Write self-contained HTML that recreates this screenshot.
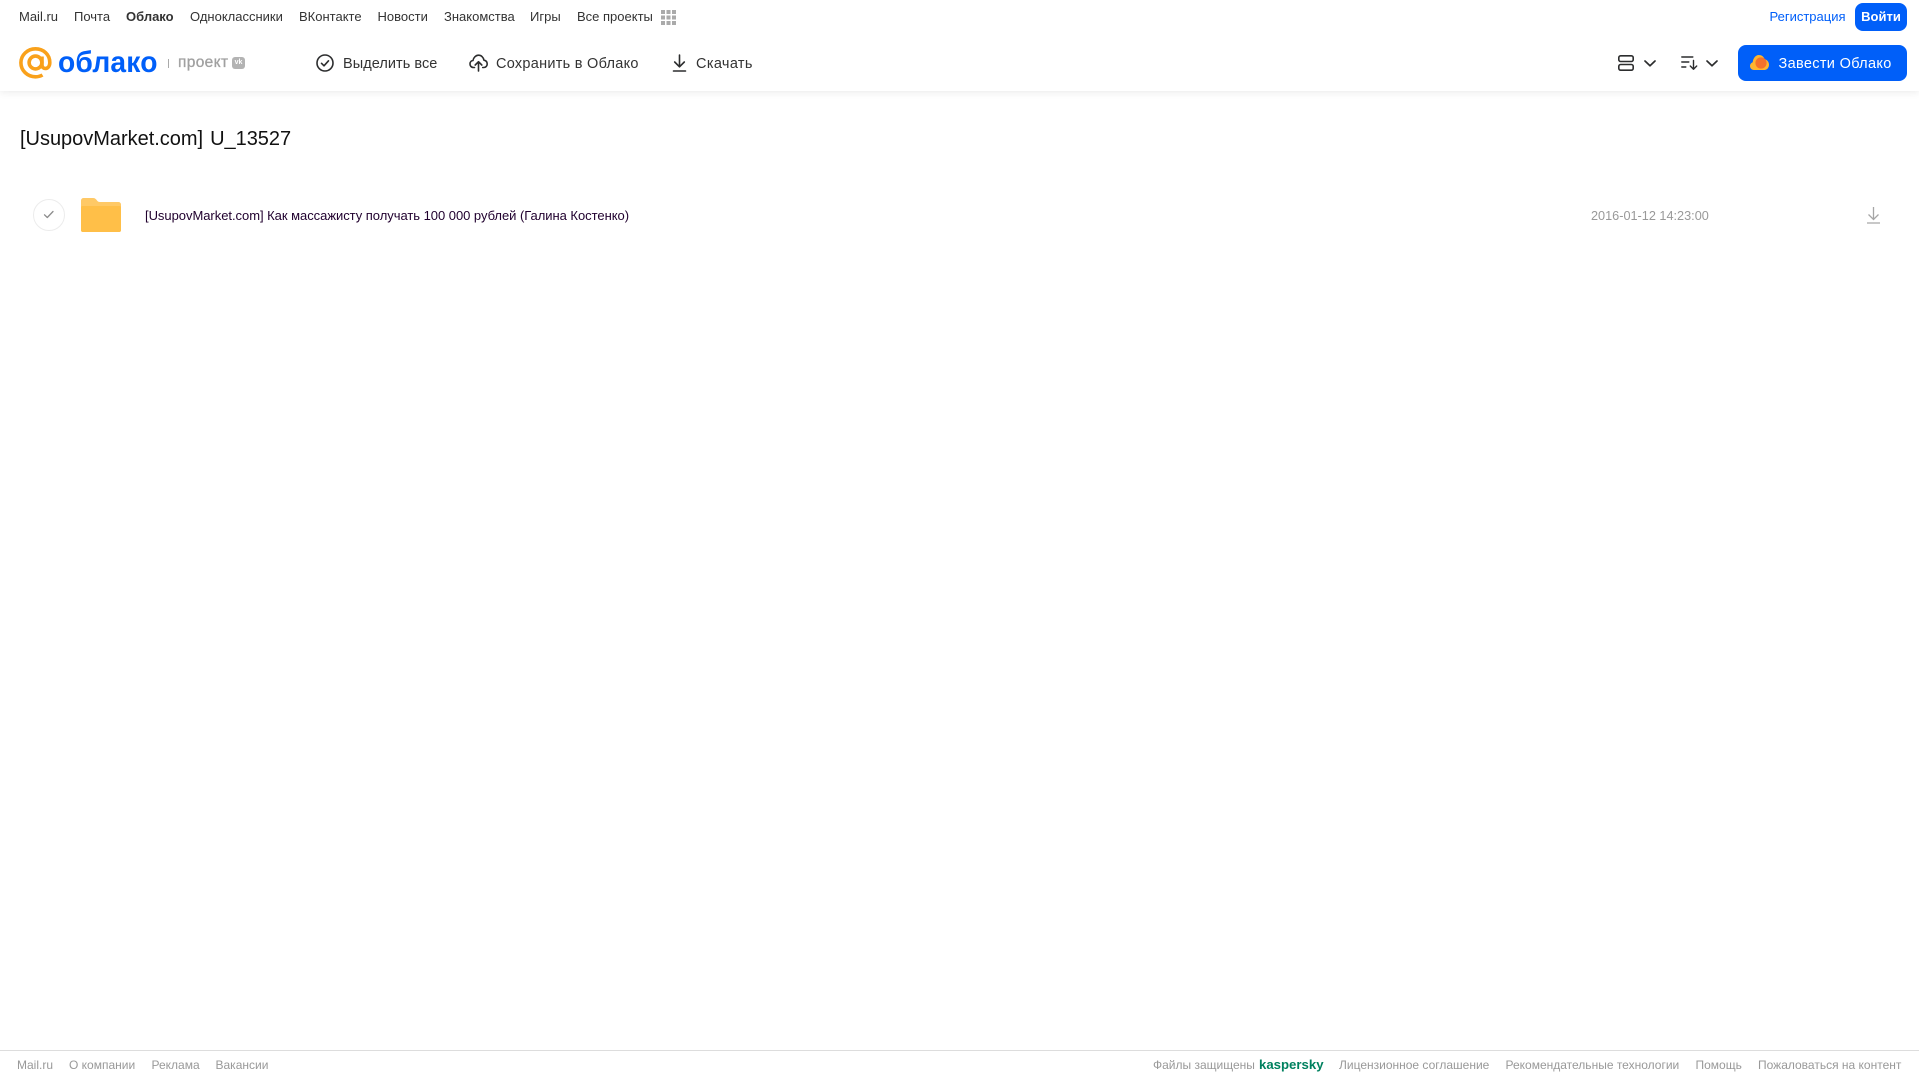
<!DOCTYPE html>
<html lang="ru"><head><meta charset="utf-8"><title>Облако</title>
<style>
html,body{margin:0;padding:0;width:1919px;height:1079px;overflow:hidden;background:#fff;font-family:"Liberation Sans",Arial,sans-serif}
.t{position:absolute;white-space:nowrap;line-height:20px;height:20px}
svg{position:absolute;overflow:visible}
.n{top:7px;font-size:13px;color:#333}
.b{top:54px;font-size:14.5px;color:#333}
.f{top:1055px;font-size:12px;color:#999}
#hd{position:absolute;left:0;top:0;width:1919px;height:91px;background:#fff;box-shadow:0 1px 8px rgba(0,0,0,.09)}
</style></head><body>
<div id="hd"></div>
<span class="t n" style="left:19px">Mail.ru</span>
<span class="t n" style="left:74px">Почта</span>
<span class="t n" style="left:126px;font-weight:bold">Облако</span>
<span class="t n" style="left:190px">Одноклассники</span>
<span class="t n" style="left:299px">ВКонтакте</span>
<span class="t n" style="left:377.500px">Новости</span>
<span class="t n" style="left:444px">Знакомства</span>
<span class="t n" style="left:530px">Игры</span>
<span class="t n" style="left:577px">Все проекты</span>
<svg style="left:661px;top:10px" width="15" height="15" fill="#aaa"><rect x="0" y="0" width="4" height="4"/><rect x="5.500" y="0" width="4" height="4"/><rect x="11" y="0" width="4" height="4"/><rect x="0" y="5.500" width="4" height="4"/><rect x="5.500" y="5.500" width="4" height="4"/><rect x="11" y="5.500" width="4" height="4"/><rect x="0" y="11" width="4" height="4"/><rect x="5.500" y="11" width="4" height="4"/><rect x="11" y="11" width="4" height="4"/></svg>
<span class="t n" style="left:1769.500px;color:#005ff9">Регистрация</span>
<div style="position:absolute;left:1855px;top:3px;width:52px;height:28px;background:#005ff9;border-radius:8px;color:#fff;font-size:13px;font-weight:bold;line-height:28px;text-align:center">Войти</div>

<svg style="left:19px;top:47px" width="33" height="32" viewBox="0 0 33 32" fill="none" stroke="#f9a11b" stroke-width="3.600"><circle cx="16.500" cy="15.500" r="6.400"/><path d="M23 9.500v8.500c0 5 7.800 5 7.800-2.500C30.800 7.500 24.500 1.800 16.500 1.800 8.500 1.800 1.900 8 1.900 15.800s6.500 14 14.600 14c2.800 0 5-.6 7-1.800"/></svg>
<span class="t" style="left:58px;top:47px;height:32px;line-height:32px;font-size:30px;font-weight:bold;color:#005ff9;letter-spacing:.2px;transform:scaleX(.94);transform-origin:0 50%">облако</span>
<div style="position:absolute;left:168px;top:59px;width:1px;height:9px;background:#aaa"></div>
<span class="t" style="left:178px;top:53px;font-size:15.500px;color:#a0a0a0;-webkit-text-stroke:.3px #a0a0a0;letter-spacing:.35px">проект</span>
<div style="position:absolute;left:232px;top:57px;width:13px;height:12px;background:#b3b3b3;border-radius:3px;color:#fff;font-size:7px;font-weight:bold;line-height:12px;text-align:center">vk</div>

<svg style="left:316px;top:54px" width="18" height="18" viewBox="0 0 18 18" fill="none" stroke="#2c2d2e" stroke-width="1.600"><circle cx="9" cy="9" r="8"/><path d="M5.500 9.300l2.500 2.500 4.500-5" stroke-linecap="round" stroke-linejoin="round"/></svg>
<span class="t b" style="left:343px;letter-spacing:.05px">Выделить все</span>
<svg style="left:469px;top:54px" width="19" height="18" viewBox="0 0 19 18" fill="none" stroke="#2c2d2e" stroke-width="1.600" stroke-linecap="round" stroke-linejoin="round"><path d="M5.500 13.500H4.500C2 13.500 1 11.500 1 10c0-2 1.300-3.300 3-3.500C4.500 3.500 7 1.200 9.500 1.200c2.800 0 5 2.200 5.500 5 2 .3 3.200 1.800 3.200 3.800 0 1.800-1.300 3.500-3.500 3.500h-1"/><path d="M9.500 17V8M6.200 11l3.300-3.300 3.300 3.300"/></svg>
<span class="t b" style="left:496px;letter-spacing:.27px">Сохранить в Облако</span>
<svg style="left:672px;top:54px" width="15" height="18" viewBox="0 0 15 18" fill="none" stroke="#2c2d2e" stroke-width="1.600" stroke-linecap="round" stroke-linejoin="round"><path d="M7.500 1v11.500M2.700 8l4.800 4.800L12.300 8M1.500 17h12"/></svg>
<span class="t b" style="left:696px;letter-spacing:.35px">Скачать</span>

<svg style="left:1618px;top:55px" width="16" height="16" viewBox="0 0 16 16" fill="none" stroke="#2c2d2e" stroke-width="1.600"><rect x=".8" y=".8" width="14.400" height="5.700" rx="1.800"/><rect x=".8" y="9.500" width="14.400" height="5.700" rx="1.800"/></svg>
<svg style="left:1644px;top:60px" width="12" height="7" viewBox="0 0 12 7" fill="none" stroke="#2c2d2e" stroke-width="1.700" stroke-linecap="round" stroke-linejoin="round"><path d="M1 1l5 4.800L11 1"/></svg>
<svg style="left:1681px;top:56px" width="17" height="14" viewBox="0 0 17 14" fill="none" stroke="#2c2d2e" stroke-width="1.400" stroke-linecap="round" stroke-linejoin="round"><path d="M.8 1h11M.8 6h7M.8 11h4M12.500 4.500V13M9.300 10l3.200 3.200 3.200-3.200"/></svg>
<svg style="left:1706px;top:60px" width="12" height="7" viewBox="0 0 12 7" fill="none" stroke="#2c2d2e" stroke-width="1.700" stroke-linecap="round" stroke-linejoin="round"><path d="M1 1l5 4.800L11 1"/></svg>

<div style="position:absolute;left:1738px;top:45px;width:169px;height:36px;background:#005ff9;border-radius:8px"></div>
<svg style="left:1750px;top:55px" width="19" height="15" viewBox="0 0 19 15"><path d="M4 15C1.500 15 0 13 0 11c0-1.800 1-3.200 2.700-3.800C3.200 3.300 5.500 0 8.800 0c2.800 0 5 1.700 5.800 4.300C17.200 4.800 19 7 19 9.700 19 12.800 16.800 15 14 15z" fill="#ffb52e"/><circle cx="11" cy="8" r="5.600" fill="#f4722b"/></svg>
<span class="t" style="left:1778.500px;top:54px;font-size:14.500px;color:#fff;letter-spacing:.33px">Завести Облако</span>

<span class="t" style="left:20px;top:126px;height:26px;line-height:26px;font-size:20px;color:#111;word-spacing:1.500px;letter-spacing:-.02px">[UsupovMarket.com] U_13527</span>

<div style="position:absolute;left:33px;top:199px;width:30px;height:30px;border:1px solid #ececec;border-radius:50%"></div>
<svg style="left:43px;top:210px" width="12" height="9" viewBox="0 0 12 9" fill="none" stroke="#8c8c8c" stroke-width="1.300" stroke-linecap="round" stroke-linejoin="round"><path d="M1.500 4.800l2.800 2.700L10 1.500"/></svg>
<svg style="left:81px;top:198px" width="40" height="34" viewBox="0 0 40 34"><path d="M0 2.500A2.500 2.500 0 0 1 2.500 0h9.500c2 0 3 1 4 2.500 .7 1 1.500 1.500 3 1.500h18.500A2.500 2.500 0 0 1 40 6.500V32a2 2 0 0 1-2 2H2a2 2 0 0 1-2-2z" fill="#ffc966"/><path d="M0 9.500A1.500 1.500 0 0 1 1.500 8h37A1.500 1.500 0 0 1 40 9.500V32a2 2 0 0 1-2 2H2a2 2 0 0 1-2-2z" fill="#ffbf48"/></svg>
<span class="t" style="left:145px;top:206px;font-size:13px;color:#20002e;letter-spacing:-.035px">[UsupovMarket.com] Как массажисту получать 100 000 рублей (Галина Костенко)</span>
<span class="t" style="left:1591px;top:206px;font-size:12.700px;color:#999">2016-01-12 14:23:00</span>
<svg style="left:1866.500px;top:207px" width="13" height="17" viewBox="0 0 13 17" fill="none" stroke="#a6a6a6" stroke-width="1.300"><path d="M6.500 0v12M1.500 7.500l5 5 5-5M0 16h13"/></svg>

<div style="position:absolute;left:0;top:1050px;width:1919px;height:1px;background:#ddd"></div>
<span class="t f" style="left:17px">Mail.ru</span>
<span class="t f" style="left:69px">О компании</span>
<span class="t f" style="left:151.500px">Реклама</span>
<span class="t f" style="left:215.500px">Вакансии</span>
<span class="t f" style="left:1153px">Файлы защищены</span>
<span class="t f" style="left:1259px;font-size:13.200px;font-weight:bold;color:#00815f">kaspersky</span>
<span class="t f" style="left:1339px">Лицензионное соглашение</span>
<span class="t f" style="left:1505.500px">Рекомендательные технологии</span>
<span class="t f" style="left:1695.500px">Помощь</span>
<span class="t f" style="left:1758px">Пожаловаться на контент</span>
</body></html>
